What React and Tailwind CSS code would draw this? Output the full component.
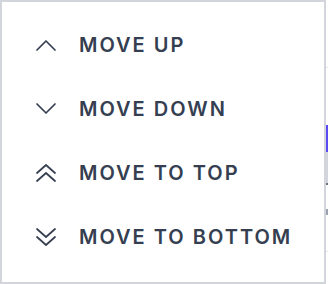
import React from "react";

const ChevronUp = () => (
  <svg width="20" height="20" viewBox="0 0 20 20" fill="none" stroke="currentColor" strokeWidth="1.7" strokeLinecap="round" strokeLinejoin="round">
    <path d="M1 15L10 6l9 9" />
  </svg>
);

const ChevronDown = () => (
  <svg width="20" height="20" viewBox="0 0 20 20" fill="none" stroke="currentColor" strokeWidth="1.7" strokeLinecap="round" strokeLinejoin="round">
    <path d="M1 5l9 9 9-9" />
  </svg>
);

const ChevronsUp = () => (
  <svg width="20" height="20" viewBox="0 0 20 20" fill="none" stroke="currentColor" strokeWidth="1.7" strokeLinecap="round" strokeLinejoin="round">
    <path d="M1 10l9-8 9 8" />
    <path d="M1 18l9-8 9 8" />
  </svg>
);

const ChevronsDown = () => (
  <svg width="20" height="20" viewBox="0 0 20 20" fill="none" stroke="currentColor" strokeWidth="1.7" strokeLinecap="round" strokeLinejoin="round">
    <path d="M1 2l9 8 9-8" />
    <path d="M1 10l9 8 9-8" />
  </svg>
);

const items = [
  { label: "Move up", icon: <ChevronUp /> },
  { label: "Move down", icon: <ChevronDown /> },
  { label: "Move to top", icon: <ChevronsUp /> },
  { label: "Move to bottom", icon: <ChevronsDown /> },
];

export default function App() {
  return (
    <div className="flex w-[328px] h-[284px] bg-white" style={{ fontFamily: "Inter, 'Noto Sans', sans-serif" }}>
      {/* menu */}
      <div className="w-[326px] h-full border-2 border-[#d2d6dc] bg-white pt-[11px]">
        <ul>
          {items.map((item) => (
            <li key={item.label} className="flex items-center h-16 pl-[34px] gap-[23px] text-[#353f51]">
              {item.icon}
              <span className="uppercase text-[20px] font-semibold tracking-[0.1em] leading-none">
                {item.label}
              </span>
            </li>
          ))}
        </ul>
      </div>

      {/* page peeking out behind the menu */}
      <div className="flex flex-col w-[2px] h-full">
        <div className="h-[67px]" />
        <div className="h-px bg-[#e5e7eb]" />
        <div className="h-[57px]" />
        <div className="h-[27px] bg-[#5b4bf0]" />
        <div className="h-[31px] bg-[#d2d6dc]" />
        <div className="h-[2px] bg-[#6b7280]" />
        <div className="h-[24px]" />
        <div className="h-[6px] bg-[#9ca3af]" />
        <div className="h-[36px]" />
        <div className="h-px bg-[#e5e7eb]" />
      </div>
    </div>
  );
}
